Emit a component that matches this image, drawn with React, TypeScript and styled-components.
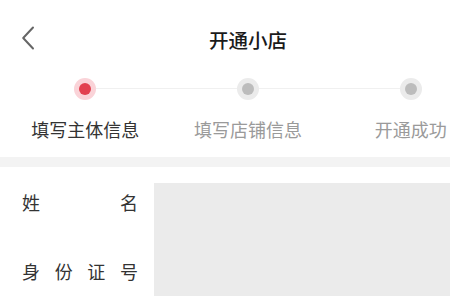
import React from "react";
import styled, { createGlobalStyle } from "styled-components";

const Global = createGlobalStyle`
  html, body { margin: 0; padding: 0; background: #ffffff; overflow: hidden; }
  body { font-family: "Noto Sans CJK SC", "Noto Sans", sans-serif; }
`;

const Viewport = styled.div`
  width: 100%;
  overflow: hidden;
`;

const Page = styled.div`
  width: 496px;
  background: #ffffff;
`;

const NavBar = styled.div`
  position: relative;
  height: 78px;
  display: flex;
  align-items: center;
  justify-content: center;
`;

const BackButton = styled.button`
  position: absolute;
  left: 16px;
  top: 24px;
  width: 24px;
  height: 28px;
  padding: 0;
  border: none;
  background: transparent;
  display: flex;
  align-items: center;
  justify-content: center;
`;

const Title = styled.div`
  font-size: 19.5px;
  font-weight: 500;
  color: #1a1a1a;
  line-height: 24px;
  margin-top: 2px;
`;

const Steps = styled.div`
  position: relative;
  display: grid;
  grid-template-columns: repeat(3, 1fr);
  padding: 0 4px;
`;

const Line = styled.div`
  position: absolute;
  left: 96px;
  right: 96px;
  top: 10px;
  height: 1px;
  background: #f0f0f0;
`;

const Step = styled.div`
  position: relative;
  display: flex;
  flex-direction: column;
  align-items: center;
`;

const Dot = styled.div<{ $active?: boolean }>`
  width: 22px;
  height: 22px;
  border-radius: 50%;
  background: ${(p) => (p.$active ? "#fad3d8" : "#ebebeb")};
  display: flex;
  align-items: center;
  justify-content: center;
  &::after {
    content: "";
    width: 12px;
    height: 12px;
    border-radius: 50%;
    background: ${(p) => (p.$active ? "#e2404f" : "#bcbcbc")};
  }
`;

const StepLabel = styled.div<{ $active?: boolean }>`
  margin-top: 17px;
  font-size: 18px;
  line-height: 24px;
  color: ${(p) => (p.$active ? "#333333" : "#9a9a9a")};
  white-space: nowrap;
`;

const Band = styled.div`
  margin-top: 16px;
  height: 10px;
  background: #f3f3f3;
`;

const Form = styled.div`
  display: grid;
  grid-template-columns: 154px 1fr;
  grid-template-rows: 69px 69px;
`;

const FieldLabel = styled.div<{ $row: number }>`
  grid-column: 1;
  grid-row: ${(p) => p.$row};
  padding-left: 22px;
  width: 116px;
  box-sizing: content-box;
  display: flex;
  align-items: center;
  justify-content: space-between;
  font-size: 18px;
  line-height: 24px;
  color: #333333;
`;

const InputArea = styled.div`
  grid-column: 2;
  grid-row: 1 / 3;
  margin: 16px 0 9px;
  background: #ebebeb;
`;

const Chars = ({ text }: { text: string }) => (
  <>
    {Array.from(text).map((c, i) => (
      <span key={i}>{c}</span>
    ))}
  </>
);

export default function App() {
  return (
    <>
      <Global />
      <Viewport>
        <Page>
          <NavBar>
            <BackButton aria-label="back">
              <svg width="14" height="24" viewBox="0 0 14 24">
                <path d="M12 1.5 L2.2 12 L12 22.5" fill="none" stroke="#666666" strokeWidth="2" strokeLinecap="round" strokeLinejoin="round" />
              </svg>
            </BackButton>
            <Title>开通小店</Title>
          </NavBar>
          <Steps>
            <Line />
            <Step>
              <Dot $active />
              <StepLabel $active>填写主体信息</StepLabel>
            </Step>
            <Step>
              <Dot />
              <StepLabel>填写店铺信息</StepLabel>
            </Step>
            <Step>
              <Dot />
              <StepLabel>开通成功</StepLabel>
            </Step>
          </Steps>
          <Band />
          <Form>
            <FieldLabel $row={1}>
              <Chars text="姓名" />
            </FieldLabel>
            <FieldLabel $row={2}>
              <Chars text="身份证号" />
            </FieldLabel>
            <InputArea />
          </Form>
        </Page>
      </Viewport>
    </>
  );
}
